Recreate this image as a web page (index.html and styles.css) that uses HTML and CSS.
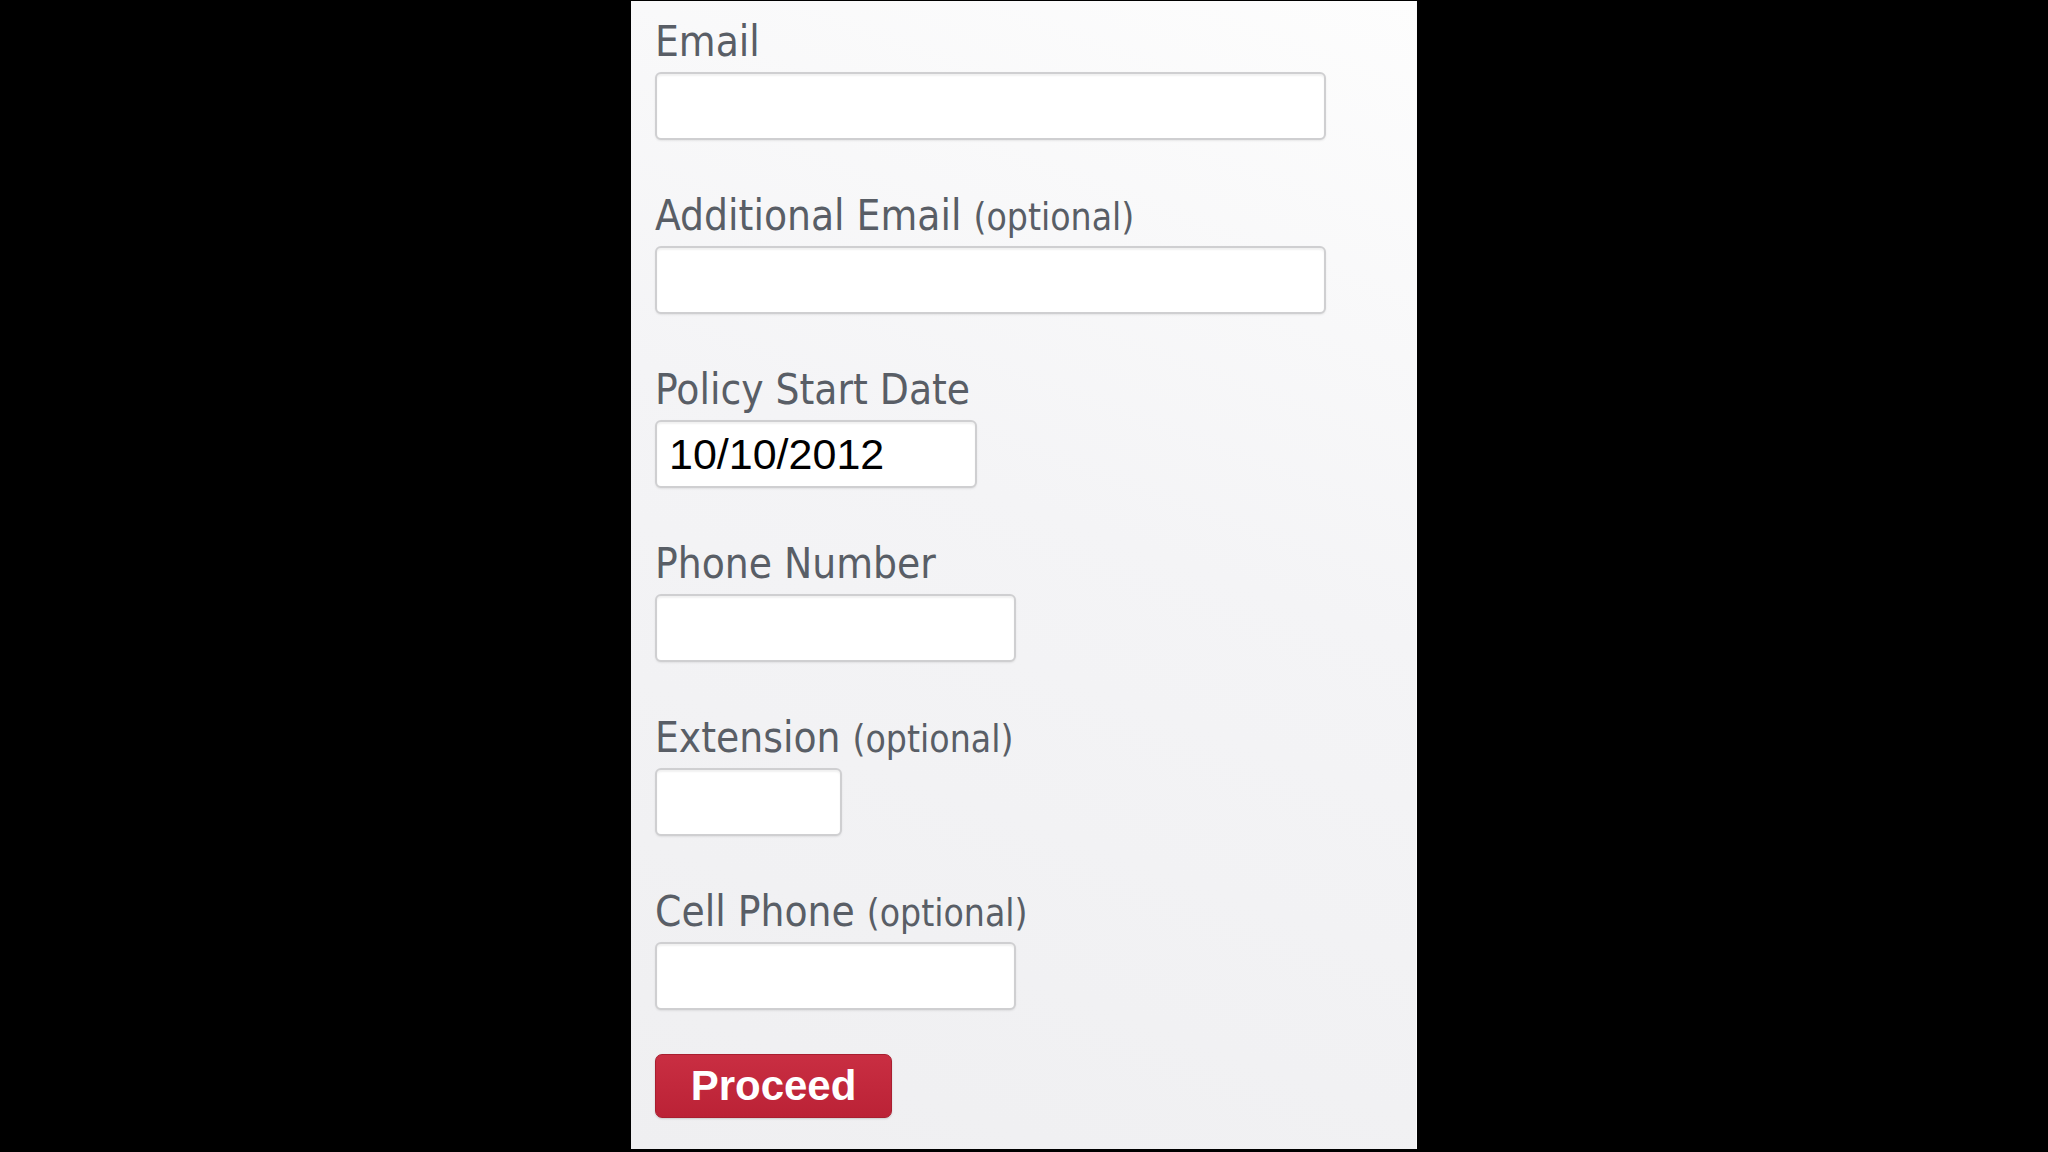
FILE: index.html
```
<!doctype html>
<html lang="en">
	<head>
		<meta charset="UTF-8" />
		<title>Contact Details</title>
		<link rel="stylesheet" href="styles.css">
	</head>
	<body>
		<div class="panel">
			<form class="contact-form" onsubmit="return false">
				<div class="field">
					<label for="email">Email</label>
					<input type="text" id="email" class="wide" />
				</div>

				<div class="field">
					<label for="email2">Additional Email <span class="optional">(optional)</span></label>
					<input type="text" id="email2" class="wide" />
				</div>

				<div class="field">
					<label for="startDate">Policy Start Date</label>
					<input type="text" id="startDate" class="date" value="10/10/2012" />
				</div>

				<div class="field">
					<label for="phone">Phone Number</label>
					<input type="text" id="phone" class="phone" />
				</div>

				<div class="field">
					<label for="ext">Extension <span class="optional">(optional)</span></label>
					<input type="text" id="ext" class="ext" />
				</div>

				<div class="field last">
					<label for="cell">Cell Phone <span class="optional">(optional)</span></label>
					<input type="text" id="cell" class="phone" />
				</div>

				<button type="submit" class="proceed">Proceed</button>
			</form>
		</div>
	</body>
</html>
```
FILE: styles.css
```
body {
	margin: 0;
	background-color: #000;
	font-family: "DejaVu Sans Condensed", "DejaVu Sans", sans-serif;
}
.panel {
	box-sizing: border-box;
	width: 786px;
	height: 1148px;
	margin: 1px 0 0 631px;
	padding: 17px 0 0 24px;
	background: linear-gradient(200deg, #fdfdfd 0%, #f4f4f6 45%, #efeff1 100%);
	border-right: 1px solid #fafafa;
}
.field {
	margin-bottom: 52px;
}
.field.last {
	margin-bottom: 44px;
}
.field label {
	display: block;
	height: 48px;
	line-height: 48px;
	font-size: 42px;
	color: #595e66;
}
.field .optional {
	font-size: 37px;
}
.field input {
	display: block;
	box-sizing: border-box;
	height: 68px;
	margin-top: 6px;
	padding: 0 12px;
	border: 2px solid #cfcfd1;
	border-radius: 6px;
	background-color: #fff;
	box-shadow: inset 0 2px 2px rgba(0, 0, 0, 0.06), 0 1px 2px rgba(0, 0, 0, 0.08);
	font-family: "Liberation Sans", Arial, sans-serif;
	font-size: 43px;
	color: #000;
	outline: none;
}
.field input.wide {
	width: 671px;
}
.field input.date {
	width: 322px;
}
.field input.phone {
	width: 361px;
}
.field input.ext {
	width: 187px;
}
.proceed {
	display: block;
	width: 237px;
	height: 64px;
	padding: 0;
	border: 1px solid #a81f30;
	border-radius: 7px;
	background: linear-gradient(#c92e42, #bb2236);
	box-shadow: 0 1px 2px rgba(0, 0, 0, 0.15);
	color: #fff;
	font-family: "Liberation Sans", Arial, sans-serif;
	font-weight: bold;
	font-size: 42px;
	cursor: pointer;
}
```
